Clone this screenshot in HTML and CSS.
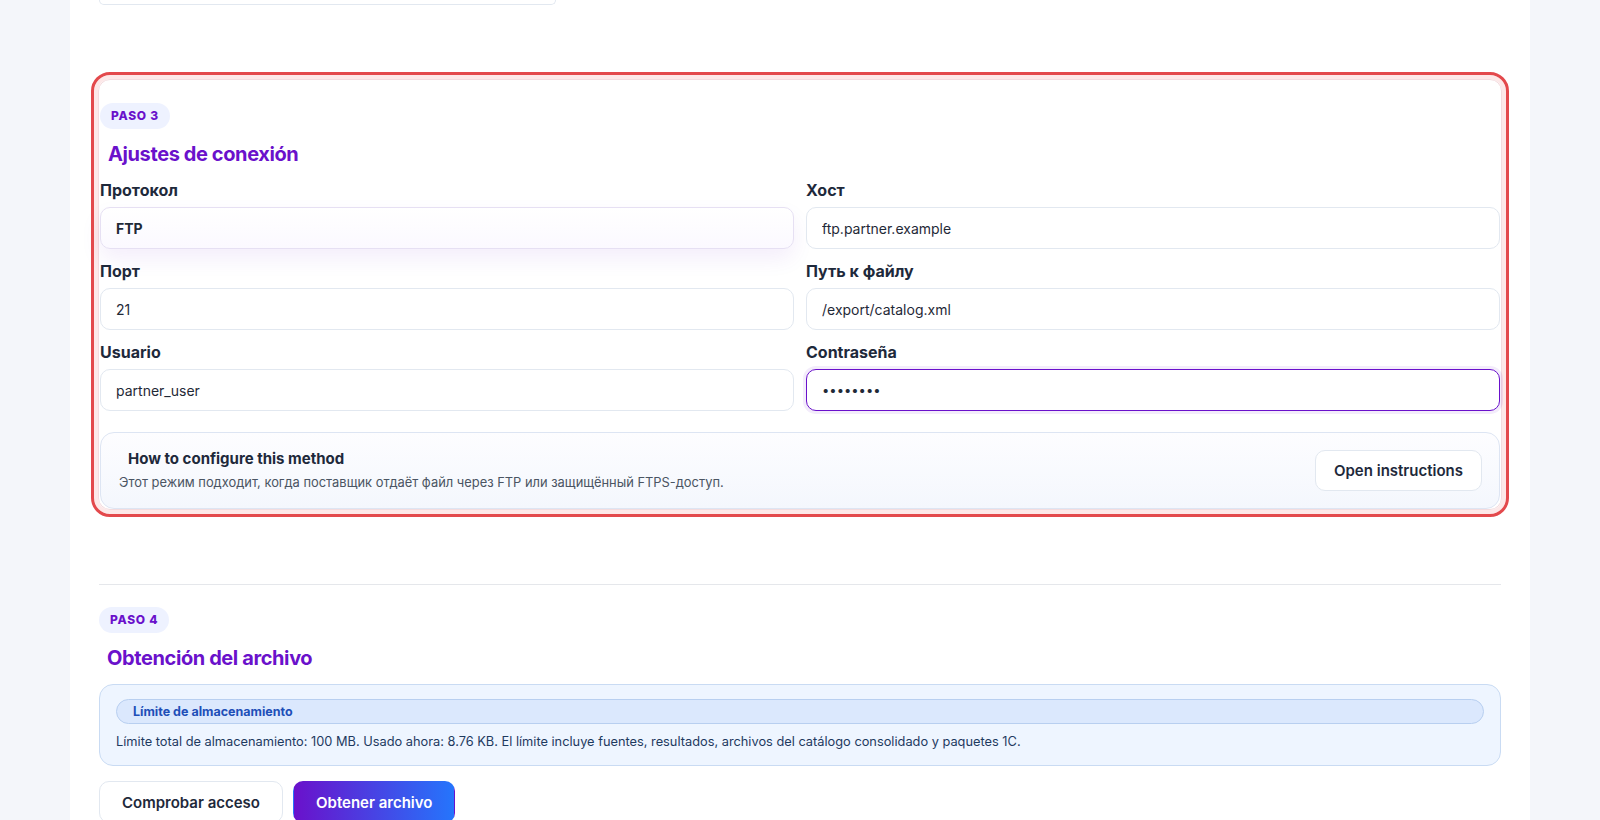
FILE: index.html
```html
<!DOCTYPE html>
<html lang="es">

<head>
    <meta charset="UTF-8">
    <meta name="viewport" content="width=device-width, initial-scale=1.0">
    <title>Fuente de datos — conexión FTP</title>
    <link rel="stylesheet" href="styles.css">
</head>

<body>
    <main class="card">
        <!-- campo del paso anterior, cortado por el scroll -->
        <div class="prev-stub"></div>

        <section class="step step--focus">
            <span class="step-badge">PASO 3</span>
            <h2 class="step-title">Ajustes de conexión</h2>

            <div class="fields">
                <label class="field">
                    <span class="field-label">Протокол</span>
                    <select class="control control--select">
                        <option selected>FTP</option>
                        <option>FTPS</option>
                        <option>SFTP</option>
                    </select>
                </label>
                <label class="field">
                    <span class="field-label">Хост</span>
                    <input class="control" type="text" value="ftp.partner.example">
                </label>
                <label class="field">
                    <span class="field-label">Порт</span>
                    <input class="control" type="text" value="21">
                </label>
                <label class="field">
                    <span class="field-label">Путь к файлу</span>
                    <input class="control" type="text" value="/export/catalog.xml">
                </label>
                <label class="field">
                    <span class="field-label">Usuario</span>
                    <input class="control" type="text" value="partner_user">
                </label>
                <label class="field">
                    <span class="field-label">Contraseña</span>
                    <input class="control control--active" type="password" value="secret12">
                </label>
            </div>

            <div class="help">
                <div class="help-text">
                    <h3>How to configure this method</h3>
                    <p>Этот режим подходит, когда поставщик отдаёт файл через FTP или защищённый FTPS-доступ.</p>
                </div>
                <button class="btn" type="button">Open instructions</button>
            </div>
        </section>

        <section class="step">
            <span class="step-badge">PASO 4</span>
            <h2 class="step-title">Obtención del archivo</h2>

            <div class="notice">
                <div class="notice-pill">Límite de almacenamiento</div>
                <p>Límite total de almacenamiento: 100 MB. Usado ahora: 8.76 KB. El límite incluye fuentes, resultados, archivos del catálogo consolidado y paquetes 1C.</p>
            </div>

            <div class="actions">
                <button class="btn" type="button">Comprobar acceso</button>
                <button class="btn btn--primary" type="button">Obtener archivo</button>
            </div>
        </section>
    </main>
</body>

</html>
```

FILE: styles.css
```css
body {
    margin: 0;
    font-family: "Inter", "Noto Sans", "Liberation Sans", sans-serif;
    color: #1e293b;
    background: #f4f6fa;
    overflow: hidden;
}

.card {
    width: 1460px;
    margin: 0 auto;
    padding: 0 29px 60px;
    box-sizing: border-box;
    background: #fff;
}

.prev-stub {
    width: 457px;
    height: 5px;
    box-sizing: border-box;
    border: 1px solid #e2e8f0;
    border-top: none;
    border-radius: 0 0 10px 10px;
}

/* шаги мастера */
.step {
    margin-top: 74px;
    padding-top: 22px;
    border-top: 1px solid #e5e7eb;
}

.step--focus {
    margin: 74px -1px 0;
    padding: 23px 1px 0;
    border: 1px solid #f3dcdf;
    border-radius: 12px;
    box-shadow: 0 0 0 4px #fde8e8;
    outline: 3px solid #e3494c;
    outline-offset: 4px;
}

.step-badge {
    display: inline-block;
    height: 26px;
    line-height: 26px;
    padding: 0 11px;
    border-radius: 999px;
    background: #eef2ff;
    color: #6a11cb;
    font-size: 12px;
    font-weight: 800;
    letter-spacing: 0.06em;
}

.step-title {
    margin: 12px 0 13px;
    padding-left: 8px;
    font-size: 20px;
    line-height: 26px;
    font-weight: 700;
    letter-spacing: -0.02em;
    color: #6a11cb;
}

.fields {
    display: grid;
    grid-template-columns: 1fr 1fr;
    gap: 12px;
}

.field {
    display: flex;
    flex-direction: column;
    gap: 7px;
}

.field-label {
    font-size: 16px;
    line-height: 20px;
    font-weight: 700;
    color: #1e293b;
}

.control {
    height: 42px;
    box-sizing: border-box;
    padding: 0 15px;
    border: 1px solid #e2e8f0;
    border-radius: 10px;
    background: #fff;
    font: inherit;
    font-size: 14px;
    color: #1f2937;
    outline: none;
}

.control--select {
    -webkit-appearance: none;
    appearance: none;
    font-weight: 700;
    border-color: #e6e0f3;
    background: linear-gradient(180deg, #ffffff, #fbf9ff);
    box-shadow: 0 10px 22px rgba(106, 17, 203, 0.07);
}

.control--active {
    border-color: #6a11cb;
    box-shadow: 0 0 0 3px rgba(106, 17, 203, 0.08);
    font-size: 13px;
}

.help {
    margin-top: 21px;
    display: flex;
    align-items: center;
    justify-content: space-between;
    padding: 16px 17px 16px 18px;
    border: 1px solid #dde5f3;
    border-radius: 14px;
    background: linear-gradient(180deg, #fdfdff, #f4f7fd);
}

.help-text h3 {
    margin: 0 0 5px;
    padding-left: 9px;
    font-size: 15px;
    line-height: 20px;
    font-weight: 700;
    color: #1e293b;
}

.help-text p {
    margin: 0;
    font-size: 12.9px;
    line-height: 18px;
    color: #4b5563;
}

.btn {
    height: 41px;
    padding: 0 18px;
    border: 1px solid #e2e8f0;
    border-radius: 10px;
    background: #fff;
    font-family: inherit;
    font-size: 15px;
    font-weight: 600;
    color: #1e293b;
    cursor: pointer;
}

.btn--primary {
    border-color: transparent;
    color: #fff;
    background: linear-gradient(90deg, #6a11cb, #2575fc);
}

.notice {
    padding: 14px 16px 13px;
    border: 1px solid #c9dbf3;
    border-radius: 14px;
    background: #eef5ff;
}

.notice-pill {
    height: 25px;
    box-sizing: border-box;
    line-height: 23px;
    padding: 0 16px;
    border: 1px solid #b8cff0;
    border-radius: 999px;
    background: #dbe8fd;
    color: #1e4fb8;
    font-size: 12.5px;
    font-weight: 700;
}

.notice p {
    margin: 8px 0 0;
    font-size: 12.8px;
    line-height: 20px;
    color: #1e3a5f;
}

.actions {
    margin-top: 15px;
    display: flex;
    gap: 10px;
}

.actions .btn {
    height: 42px;
    padding: 0 22px;
}
```
